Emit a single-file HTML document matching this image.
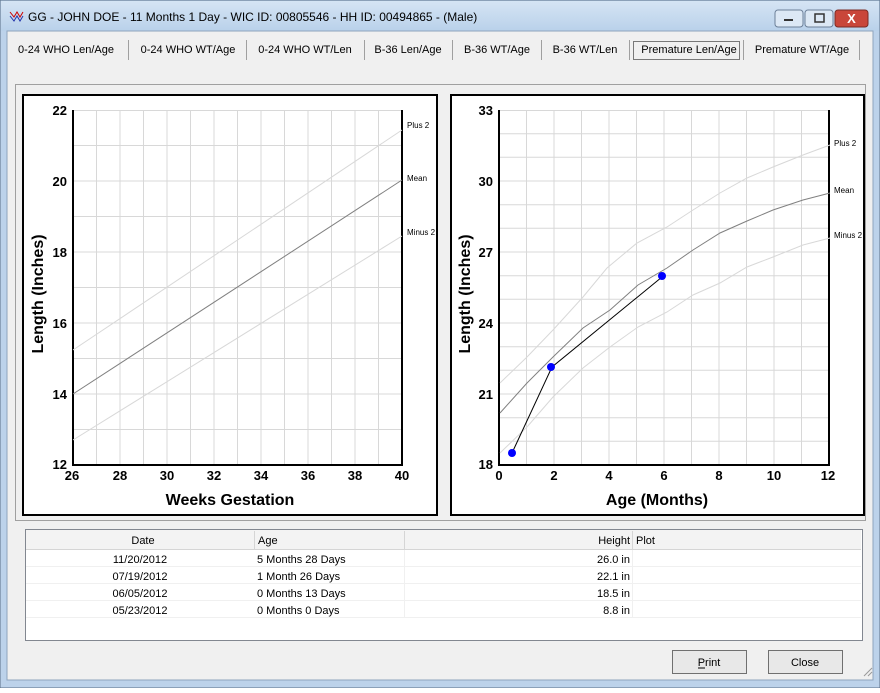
<!DOCTYPE html>
<html><head><style>
body{margin:0;width:880px;height:688px;overflow:hidden;font-family:"Liberation Sans",sans-serif;}
</style></head><body>
<svg width="880" height="688" xmlns="http://www.w3.org/2000/svg" font-family="Liberation Sans, sans-serif">
<defs><linearGradient id="tb" x1="0" y1="0" x2="0" y2="1"><stop offset="0" stop-color="#d5e4f4"/><stop offset="1" stop-color="#b9d1ea"/></linearGradient></defs>
<rect x="0" y="0" width="880" height="688" fill="#bcd2ea" stroke="#5a6e86"/>
<rect x="1" y="1" width="878" height="30" fill="url(#tb)"/>
<rect x="7" y="31" width="866" height="649" fill="#f0f0f0" stroke="#8ea4bd"/>
<text x="28" y="21" font-size="12" fill="#000">GG - JOHN DOE - 11 Months 1 Day - WIC ID: 00805546 - HH ID: 00494865 - (Male)</text>
<g stroke-width="1"><path d="M10 12l4 5 3-5 3 5 3-5" stroke="#c00" fill="none"/><path d="M10 16l4 5 3-5 3 5 3-5" stroke="#23a" fill="none"/></g>
<rect x="775" y="10" width="28" height="17" rx="3" fill="#dce8f5" stroke="#6c7f98"/><rect x="784" y="19" width="9" height="2" fill="#333"/>
<rect x="805" y="10" width="28" height="17" rx="3" fill="#dce8f5" stroke="#6c7f98"/><rect x="815" y="14" width="9" height="8" fill="none" stroke="#333" stroke-width="1.5"/>
<rect x="835" y="10" width="33" height="17" rx="3" fill="#c9463a" stroke="#7a2b24"/><text x="851.5" y="23" font-size="13" font-weight="bold" fill="#fff" text-anchor="middle">X</text>
<g font-size="11" fill="#000" text-anchor="middle">
<text x="66" y="53">0-24 WHO Len/Age</text><text x="188" y="53">0-24 WHO WT/Age</text><text x="305" y="53">0-24 WHO WT/Len</text><text x="408" y="53">B-36 Len/Age</text><text x="497" y="53">B-36 WT/Age</text><text x="585" y="53">B-36 WT/Len</text><text x="689" y="53">Premature Len/Age</text><text x="802" y="53">Premature WT/Age</text>
</g>
<g stroke="#a0a0a0"><path d="M128.5 40v20M246.5 40v20M364.5 40v20M452.5 40v20M541.5 40v20M629.5 40v20M743.5 40v20M859.5 40v20"/></g>
<rect x="633.5" y="41.5" width="106" height="18" fill="none" stroke="#000" stroke-dasharray="1,1"/>
<rect x="15.5" y="84.5" width="850" height="436" fill="#f0f0f0" stroke="#a0a0a0"/>
<!-- left chart -->
<rect x="23" y="95" width="414" height="420" fill="#fff" stroke="#000" stroke-width="2"/>
<g stroke="#d8d8d8"><path d="M96.5 110V465M120 110V465M143.5 110V465M167 110V465M190.5 110V465M214 110V465M237.5 110V465M261 110V465M284.5 110V465M308 110V465M331.5 110V465M355 110V465M378.5 110V465M73 145.5H402M73 181H402M73 216.5H402M73 252H402M73 287.5H402M73 323H402M73 358.5H402M73 394H402M73 429.5H402M73 110.5H402"/></g>
<path d="M73 110V465H402V110" fill="none" stroke="#000" stroke-width="2"/>
<path d="M73 350L402 130" stroke="#d8d8d8" fill="none"/>
<path d="M73 394L402 180" stroke="#808080" fill="none"/>
<path d="M73 440L402 236" stroke="#d8d8d8" fill="none"/>
<g font-size="8" fill="#000"><text x="407" y="128">Plus 2</text><text x="407" y="181">Mean</text><text x="407" y="235">Minus 2</text></g>
<g font-size="13" font-weight="bold" text-anchor="end"><text x="67" y="115">22</text><text x="67" y="186">20</text><text x="67" y="257">18</text><text x="67" y="328">16</text><text x="67" y="399">14</text><text x="67" y="469">12</text></g>
<g font-size="13" font-weight="bold" text-anchor="middle"><text x="72" y="480">26</text><text x="120" y="480">28</text><text x="167" y="480">30</text><text x="214" y="480">32</text><text x="261" y="480">34</text><text x="308" y="480">36</text><text x="355" y="480">38</text><text x="402" y="480">40</text></g>
<text x="230" y="505" font-size="16" font-weight="bold" text-anchor="middle">Weeks Gestation</text>
<text transform="translate(43 294) rotate(-90)" font-size="16" font-weight="bold" text-anchor="middle">Length (Inches)</text>
<!-- right chart -->
<rect x="451" y="95" width="413" height="420" fill="#fff" stroke="#000" stroke-width="2"/>
<g stroke="#d8d8d8"><path d="M526.5 110V465M554 110V465M581.5 110V465M609 110V465M636.5 110V465M664 110V465M691.5 110V465M719 110V465M746.5 110V465M774 110V465M801.5 110V465M499 110.5H829M499 133.7H829M499 157.3H829M499 181H829M499 204.7H829M499 228.3H829M499 252H829M499 275.7H829M499 299.3H829M499 323H829M499 346.7H829M499 370.3H829M499 394H829M499 417.7H829M499 441.3H829"/></g>
<path d="M499 110V465H829V110" fill="none" stroke="#000" stroke-width="2"/>
<polyline fill="none" stroke="#d8d8d8" points="500,383 527,357 553,330 583,297 607,268 637,243 667,227 693,210 720,193 747,178 773,167 803,155 830,145"/>
<polyline fill="none" stroke="#808080" points="500,413 527,383 553,357 583,328 610,310 638,285 667,268 693,250 720,233 747,221 773,210 803,200 830,193"/>
<polyline fill="none" stroke="#d8d8d8" points="500,453 527,427 553,397 583,368 610,347 638,327 667,312 693,295 720,283 747,267 773,257 803,245 830,238"/>
<polyline fill="none" stroke="#000" points="512,453 552,367 662,277"/>
<g fill="#0000ff"><circle cx="512" cy="453" r="4"/><circle cx="551" cy="367" r="4"/><circle cx="662" cy="276" r="4"/></g>
<g font-size="8" fill="#000"><text x="834" y="146">Plus 2</text><text x="834" y="193">Mean</text><text x="834" y="238">Minus 2</text></g>
<g font-size="13" font-weight="bold" text-anchor="end"><text x="493" y="115">33</text><text x="493" y="186">30</text><text x="493" y="257">27</text><text x="493" y="328">24</text><text x="493" y="399">21</text><text x="493" y="469">18</text></g>
<g font-size="13" font-weight="bold" text-anchor="middle"><text x="499" y="480">0</text><text x="554" y="480">2</text><text x="609" y="480">4</text><text x="664" y="480">6</text><text x="719" y="480">8</text><text x="774" y="480">10</text><text x="828" y="480">12</text></g>
<text x="657" y="505" font-size="16" font-weight="bold" text-anchor="middle">Age (Months)</text>
<text transform="translate(470 294) rotate(-90)" font-size="16" font-weight="bold" text-anchor="middle">Length (Inches)</text>
<!-- table -->
<rect x="25.5" y="529.5" width="837" height="111" fill="#fff" stroke="#828790"/>
<rect x="26" y="530" width="835" height="19" fill="#f3f3f3"/>
<path d="M26 549.5H861" stroke="#d5d5d5"/>
<g stroke="#d5d5d5"><path d="M254.5 531v18M404.5 531v18M632.5 531v18"/></g>
<g stroke="#f0f0f0"><path d="M26 566.5H861M26 583.5H861M26 600.5H861M26 617.5H861M404.5 550v67M632.5 550v67"/></g>
<g font-size="11" fill="#000">
<text x="143" y="544" text-anchor="middle">Date</text><text x="258" y="544">Age</text><text x="630" y="544" text-anchor="end">Height</text><text x="636" y="544">Plot</text>
<text x="140" y="563" text-anchor="middle">11/20/2012</text><text x="257" y="563">5 Months 28 Days</text><text x="630" y="563" text-anchor="end">26.0 in</text>
<text x="140" y="580" text-anchor="middle">07/19/2012</text><text x="257" y="580">1 Month 26 Days</text><text x="630" y="580" text-anchor="end">22.1 in</text>
<text x="140" y="597" text-anchor="middle">06/05/2012</text><text x="257" y="597">0 Months 13 Days</text><text x="630" y="597" text-anchor="end">18.5 in</text>
<text x="140" y="614" text-anchor="middle">05/23/2012</text><text x="257" y="614">0 Months 0 Days</text><text x="630" y="614" text-anchor="end">8.8 in</text>
</g>
<rect x="672.5" y="650.5" width="74" height="23" fill="#e8e8e8" stroke="#707070"/>
<rect x="768.5" y="650.5" width="74" height="23" fill="#e8e8e8" stroke="#707070"/>
<g font-size="11" text-anchor="middle"><text x="709" y="666">Print</text><text x="805" y="666">Close</text></g>
<path d="M698 668h7" stroke="#000"/>
<g stroke="#999"><path d="M864 676l8-8M868 676l4-4"/></g>
</svg>
</body></html>
